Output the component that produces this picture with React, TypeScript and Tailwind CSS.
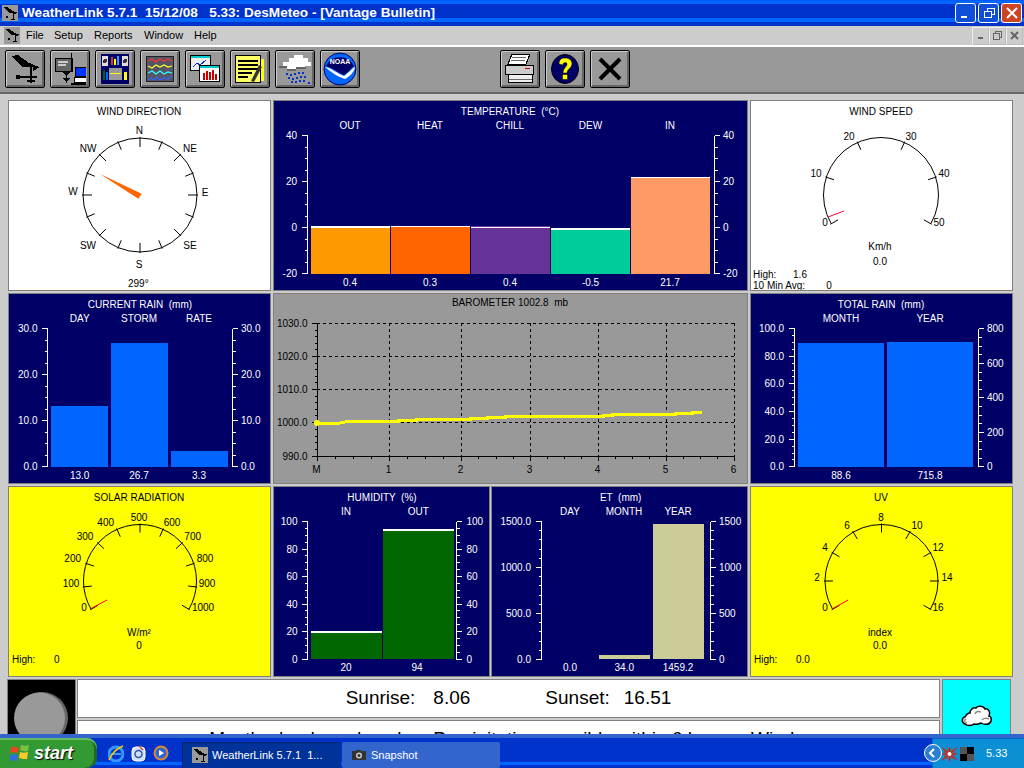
import type { ReactNode } from 'react'

const FONT = "'Liberation Sans', Arial, sans-serif"

// text centred on (x, y) by default, all chart text is 10px Arial in the original
function T({ x, y, fill = '#000', a = 'middle', children }: { x: number; y: number; fill?: string; a?: 'middle' | 'start' | 'end'; children: ReactNode }) {
  return (
    <text x={x} y={y + 3.5} fill={fill} textAnchor={a} fontSize={10} fontFamily={FONT} xmlSpace="preserve">
      {children}
    </text>
  )
}

function Chart({ x, y, w, h, children }: { x: number; y: number; w: number; h: number; children: ReactNode }) {
  return (
    <svg className="block" width={w} height={h} viewBox={`${x} ${y} ${w} ${h}`}>
      {children}
    </svg>
  )
}

type Scale = { v: string; y: number }[]

function Axis({ x, side, scale, minors, labelX, color = '#fff' }: { x: number; side: 'l' | 'r'; scale: Scale; minors: number; labelX: number; color?: string }) {
  const dir = side === 'l' ? -1 : 1
  const ticks: number[] = []
  scale.forEach((s, i) => {
    if (i === scale.length - 1) return
    const next = scale[i + 1].y
    for (let m = 1; m <= minors; m++) ticks.push(s.y + ((next - s.y) * m) / (minors + 1))
  })
  return (
    <g shapeRendering="crispEdges">
      <line x1={x} x2={x} y1={scale[0].y} y2={scale[scale.length - 1].y + 0.5} stroke={color} />
      {scale.map((s) => (
        <line key={s.v} x1={x} x2={x + dir * 5.5} y1={s.y} y2={s.y} stroke={color} />
      ))}
      {ticks.map((t) => (
        <line key={t} x1={x} x2={x + dir * 3} y1={t} y2={t} stroke={color} />
      ))}
      {scale.map((s) => (
        <T key={s.v} x={labelX} y={s.y} fill={color} a={side === 'l' ? 'end' : 'start'}>
          {s.v}
        </T>
      ))}
    </g>
  )
}

function Bar({ x1, x2, top, bottom, fill, line }: { x1: number; x2: number; top: number; bottom: number; fill: string; line?: number }) {
  return (
    <g shapeRendering="crispEdges">
      <rect x={x1} y={top} width={x2 - x1} height={bottom - top} fill={fill} />
      {line !== undefined && <rect x={x1} y={line} width={x2 - x1} height={2} fill="#fff" />}
    </g>
  )
}

function polar(cx: number, cy: number, r: number, deg: number) {
  const a = (deg * Math.PI) / 180
  return [cx + r * Math.sin(a), cy - r * Math.cos(a)]
}

function Gauge({ cx, cy, r, segments, needle }: { cx: number; cy: number; r: number; segments: number; needle: number[] }) {
  const [ax, ay] = polar(cx, cy, r, -120)
  const [bx, by] = polar(cx, cy, r, 120)
  const ticks = Array.from({ length: segments + 1 }, (_, i) => -120 + (240 * i) / segments)
  return (
    <g fill="none" stroke="#000" strokeWidth={1}>
      <path d={`M${ax} ${ay}A${r} ${r} 0 1 1 ${bx} ${by}`} />
      {ticks.map((d) => {
        const [x1, y1] = polar(cx, cy, r + 1, d)
        const [x2, y2] = polar(cx, cy, r - 8, d)
        return <line key={d} x1={x1} y1={y1} x2={x2} y2={y2} />
      })}
      <line x1={needle[0]} y1={needle[1]} x2={needle[2]} y2={needle[3]} stroke="#ff0033" />
    </g>
  )
}

function WindDirection() {
  const ticks = Array.from({ length: 16 }, (_, i) => i * 22.5)
  return (
    <Chart x={9} y={101} w={261} h={189}>
      <T x={139} y={111.7}>WIND DIRECTION</T>
      <circle cx={140} cy={195} r={57} fill="none" stroke="#000" />
      {ticks.map((d) => {
        const [x1, y1] = polar(140, 195, 58, d)
        const [x2, y2] = polar(140, 195, d % 45 === 0 ? 48 : 49, d)
        return <line key={d} x1={x1} y1={y1} x2={x2} y2={y2} stroke="#000" />
      })}
      <polygon points="100,174 141.7,193.7 138.3,198.7" fill="#ff6600" />
      <T x={139.3} y={130}>N</T>
      <T x={190} y={148}>NE</T>
      <T x={205} y={192}>E</T>
      <T x={190} y={245.7}>SE</T>
      <T x={139} y={264}>S</T>
      <T x={88} y={245.7}>SW</T>
      <T x={73} y={191.7}>W</T>
      <T x={88} y={148}>NW</T>
      <T x={138.3} y={283}>299°</T>
    </Chart>
  )
}

function Temperature() {
  const scale = [
    { v: '40', y: 135.5 },
    { v: '20', y: 181.5 },
    { v: '0', y: 227.5 },
    { v: '-20', y: 273.5 },
  ]
  const heads = [
    ['OUT', 350, '0.4'],
    ['HEAT', 430, '0.3'],
    ['CHILL', 510, '0.4'],
    ['DEW', 590.5, '-0.5'],
    ['IN', 670, '21.7'],
  ] as const
  return (
    <Chart x={274} y={101} w={473} h={189}>
      <T x={510} y={111.7} fill="#fff">TEMPERATURE  (°C)</T>
      {heads.map((h) => (
        <T key={h[0]} x={h[1]} y={125.7} fill="#fff">{h[0]}</T>
      ))}
      <Axis x={307.5} side="l" scale={scale} minors={3} labelX={297} />
      <Axis x={714.5} side="r" scale={scale} minors={3} labelX={723} />
      <Bar x1={311} x2={390} top={226} bottom={274} fill="#ff9900" line={226} />
      <Bar x1={391} x2={470} top={226} bottom={274} fill="#ff6600" />
      <rect x={391} y={226} width={79} height={1} fill="#fff" shapeRendering="crispEdges" />
      <Bar x1={471} x2={550} top={226} bottom={274} fill="#663399" />
      <rect x={471} y={227} width={79} height={1} fill="#fff" shapeRendering="crispEdges" />
      <Bar x1={551} x2={630} top={228} bottom={274} fill="#00cc99" line={228} />
      <Bar x1={631} x2={710} top={177} bottom={274} fill="#ff9966" />
      <rect x={631} y={177} width={79} height={1} fill="#fff" shapeRendering="crispEdges" />
      {heads.map((h) => (
        <T key={h[0]} x={h[1]} y={282.3} fill="#fff">{h[2]}</T>
      ))}
    </Chart>
  )
}

function WindSpeed() {
  const labels = [
    ['0', 825, 222],
    ['10', 816, 173],
    ['20', 849, 136],
    ['30', 911, 136],
    ['40', 944, 173],
    ['50', 939, 222],
  ] as const
  return (
    <Chart x={751} y={101} w={261} h={189}>
      <T x={881} y={111.7}>WIND SPEED</T>
      <Gauge cx={881} cy={195} r={57.5} segments={5} needle={[828, 217, 844, 211]} />
      {labels.map((l) => (
        <T key={l[0]} x={l[1]} y={l[2]}>{l[0]}</T>
      ))}
      <T x={880} y={246.7}>Km/h</T>
      <T x={880} y={261}>0.0</T>
      <T x={753} y={274.7} a="start">High:</T>
      <T x={800} y={274.7}>1.6</T>
      <T x={753} y={285.7} a="start">10 Min Avg:</T>
      <T x={829} y={285.7}>0</T>
    </Chart>
  )
}

function CurrentRain() {
  const scale = [
    { v: '30.0', y: 328.5 },
    { v: '20.0', y: 374.5 },
    { v: '10.0', y: 420.5 },
    { v: '0.0', y: 466.5 },
  ]
  return (
    <Chart x={9} y={294} w={261} h={189}>
      <T x={140} y={304.7} fill="#fff">CURRENT RAIN  (mm)</T>
      <T x={79.7} y={318.7} fill="#fff">DAY</T>
      <T x={139} y={318.7} fill="#fff">STORM</T>
      <T x={199} y={318.7} fill="#fff">RATE</T>
      <Axis x={47.5} side="l" scale={scale} minors={3} labelX={37.5} />
      <Axis x={232.5} side="r" scale={scale} minors={3} labelX={241} />
      <Bar x1={51} x2={108} top={406} bottom={467} fill="#0066ff" />
      <Bar x1={111} x2={168} top={343} bottom={467} fill="#0066ff" />
      <Bar x1={171} x2={228} top={451} bottom={467} fill="#0066ff" />
      <T x={79.7} y={475.3} fill="#fff">13.0</T>
      <T x={139} y={475.3} fill="#fff">26.7</T>
      <T x={199} y={475.3} fill="#fff">3.3</T>
    </Chart>
  )
}

function Barometer() {
  const xs = [317.5, 389.5, 461.5, 530.5, 598.5, 666.5, 734.5]
  const ys = [323.5, 356.5, 389.5, 422.5, 456.5]
  const yLabels = ['1030.0', '1020.0', '1010.0', '1000.0', '990.0']
  const xLabels = ['M', '1', '2', '3', '4', '5', '6']
  const line = '317,423 340,423 348,421.5 398,421.5 398,420.5 416,420.5 416,419.5 470,419.5 470,418.5 487,418.5 487,417.5 505,417.5 505,416.5 603,416.5 603,415.5 612,415.5 612,414.5 675,414.5 675,413.5 692,413.5 692,412.5 702,412.5'
  const yMinor: number[] = []
  for (let i = 0; i < 4; i++) for (let m = 1; m < 5; m++) yMinor.push(ys[i] + ((ys[i + 1] - ys[i]) * m) / 5)
  const xMinor: number[] = []
  for (let i = 0; i < 6; i++) for (let m = 1; m < 4; m++) xMinor.push(xs[i] + ((xs[i + 1] - xs[i]) * m) / 4)
  return (
    <Chart x={274} y={294} w={473} h={189}>
      <T x={510} y={302.3}>BAROMETER 1002.8  mb</T>
      <g shapeRendering="crispEdges" stroke="#000" strokeDasharray="3 3">
        {xs.slice(1).map((x) => (
          <line key={x} x1={x} x2={x} y1={323} y2={456} />
        ))}
        {ys.slice(0, 4).map((y) => (
          <line key={y} x1={317} x2={735} y1={y} y2={y} />
        ))}
      </g>
      <g shapeRendering="crispEdges" stroke="#000">
        <line x1={317.5} x2={317.5} y1={323} y2={461} />
        <line x1={312} x2={735} y1={456.5} y2={456.5} />
        {ys.map((y) => (
          <line key={y} x1={312} x2={317} y1={y} y2={y} />
        ))}
        {yMinor.map((y) => (
          <line key={y} x1={315} x2={317} y1={y} y2={y} />
        ))}
        {xs.map((x) => (
          <line key={x} x1={x} x2={x} y1={456} y2={461} />
        ))}
        {xMinor.map((x) => (
          <line key={x} x1={x} x2={x} y1={456} y2={459} />
        ))}
      </g>
      <polyline points={line} fill="none" stroke="#ffff00" strokeWidth={3} shapeRendering="crispEdges" />
      <circle cx={317} cy={423} r={3} fill="#ffff00" />
      {ys.map((y, i) => (
        <T key={y} x={307.5} y={y} a="end">{yLabels[i]}</T>
      ))}
      {xs.map((x, i) => (
        <T key={x} x={x - 1} y={469.7}>{xLabels[i]}</T>
      ))}
    </Chart>
  )
}

function TotalRain() {
  const left = [
    { v: '100.0', y: 328.5 },
    { v: '80.0', y: 356.5 },
    { v: '60.0', y: 383.5 },
    { v: '40.0', y: 411.5 },
    { v: '20.0', y: 439.5 },
    { v: '0.0', y: 466.5 },
  ]
  const right = [
    { v: '800', y: 328.5 },
    { v: '600', y: 363.5 },
    { v: '400', y: 397.5 },
    { v: '200', y: 432.5 },
    { v: '0', y: 466.5 },
  ]
  return (
    <Chart x={751} y={294} w={261} h={189}>
      <T x={881} y={304.7} fill="#fff">TOTAL RAIN  (mm)</T>
      <T x={841} y={318.7} fill="#fff">MONTH</T>
      <T x={930} y={318.7} fill="#fff">YEAR</T>
      <Axis x={794.5} side="l" scale={left} minors={3} labelX={784} />
      <Axis x={978.5} side="r" scale={right} minors={3} labelX={987} />
      <Bar x1={798} x2={884} top={343} bottom={467} fill="#0066ff" />
      <Bar x1={887} x2={973} top={342} bottom={467} fill="#0066ff" />
      <T x={841} y={475.3} fill="#fff">88.6</T>
      <T x={930} y={475.3} fill="#fff">715.8</T>
    </Chart>
  )
}

function SolarRadiation() {
  const labels = [
    ['0', 84, 607],
    ['100', 71, 583],
    ['200', 72.7, 558],
    ['300', 85, 536.7],
    ['400', 105.7, 522],
    ['500', 139, 517],
    ['600', 172, 522],
    ['700', 192.7, 536],
    ['800', 205, 558],
    ['900', 207, 583],
    ['1000', 203, 607],
  ] as const
  return (
    <Chart x={9} y={487} w={261} h={189}>
      <T x={139} y={497}>SOLAR RADIATION</T>
      <Gauge cx={140} cy={581} r={56.5} segments={10} needle={[90.7, 608.7, 107, 600]} />
      {labels.map((l) => (
        <T key={l[0]} x={l[1]} y={l[2]}>{l[0]}</T>
      ))}
      <T x={139} y={632.7}>W/m²</T>
      <T x={139} y={645}>0</T>
      <T x={12} y={659.7} a="start">High:</T>
      <T x={56.7} y={659.7}>0</T>
    </Chart>
  )
}

function Humidity() {
  const scale = [100, 80, 60, 40, 20, 0].map((v, i) => ({ v: String(v), y: 521.5 + i * 27.5 }))
  return (
    <Chart x={274} y={487} w={215} h={189}>
      <T x={382} y={497.7} fill="#fff">HUMIDITY  (%)</T>
      <T x={346} y={511.3} fill="#fff">IN</T>
      <T x={418.3} y={511.3} fill="#fff">OUT</T>
      <Axis x={307.5} side="l" scale={scale} minors={3} labelX={297.5} />
      <Axis x={456.5} side="r" scale={scale} minors={3} labelX={466.5} />
      <Bar x1={311} x2={382} top={631} bottom={659} fill="#006600" line={631} />
      <Bar x1={383} x2={454} top={529} bottom={659} fill="#006600" line={529} />
      <T x={346} y={667.7} fill="#fff">20</T>
      <T x={417} y={667.7} fill="#fff">94</T>
    </Chart>
  )
}

function Et() {
  const left = [
    { v: '1500.0', y: 521.5 },
    { v: '1000.0', y: 567.5 },
    { v: '500.0', y: 613.5 },
    { v: '0.0', y: 659.5 },
  ]
  const right = [
    { v: '1500', y: 521.5 },
    { v: '1000', y: 567.5 },
    { v: '500', y: 613.5 },
    { v: '0', y: 659.5 },
  ]
  return (
    <Chart x={492} y={487} w={255} h={189}>
      <T x={620.7} y={497.7} fill="#fff">ET  (mm)</T>
      <T x={570} y={511.3} fill="#fff">DAY</T>
      <T x={624} y={511.3} fill="#fff">MONTH</T>
      <T x={678} y={511.3} fill="#fff">YEAR</T>
      <Axis x={541.5} side="l" scale={left} minors={4} labelX={531} />
      <Axis x={710.5} side="r" scale={right} minors={4} labelX={719} />
      <Bar x1={599} x2={650} top={655} bottom={659} fill="#cccc99" />
      <Bar x1={653} x2={704} top={524} bottom={659} fill="#cccc99" />
      <T x={570} y={667.7} fill="#fff">0.0</T>
      <T x={624.3} y={667.7} fill="#fff">34.0</T>
      <T x={678} y={667.7} fill="#fff">1459.2</T>
    </Chart>
  )
}

function Uv() {
  const labels = [
    ['0', 825, 607.7],
    ['2', 817, 577],
    ['4', 825, 547],
    ['6', 847, 525],
    ['8', 881, 517],
    ['10', 917, 525],
    ['12', 938, 547],
    ['14', 947, 577],
    ['16', 938, 607.7],
  ] as const
  return (
    <Chart x={751} y={487} w={261} h={189}>
      <T x={881} y={497}>UV</T>
      <Gauge cx={881.5} cy={581} r={56.5} segments={8} needle={[832, 609, 848, 600]} />
      {labels.map((l) => (
        <T key={l[0]} x={l[1]} y={l[2]}>{l[0]}</T>
      ))}
      <T x={880} y={632.7}>index</T>
      <T x={880} y={645}>0.0</T>
      <T x={754} y={659} a="start">High:</T>
      <T x={796} y={659} a="start">0.0</T>
    </Chart>
  )
}

function StationIcon({ size = 16 }: { size?: number }) {
  return (
    <svg width={size} height={size} viewBox="0 0 32 32" shapeRendering="crispEdges">
      <polygon points="2,3 9,2 20,10 24,11 24,14 14,14" fill="#000" />
      <rect x="21" y="11" width="2" height="19" fill="#000" />
      <polygon points="24,12 31,14 24,18" fill="#000" />
      <rect x="8" y="23" width="20" height="1.5" fill="#000" />
      <rect x="7" y="22" width="4" height="4" fill="#000" />
      <rect x="18" y="27" width="8" height="2" fill="#000" />
    </svg>
  )
}

function LinkIcon() {
  return (
    <svg width="32" height="34" viewBox="0 0 32 34" shapeRendering="crispEdges">
      <rect x="1" y="6" width="17" height="13" fill="#666" stroke="#000" />
      <rect x="4" y="9" width="10" height="2" fill="#ccc" />
      <rect x="4" y="12" width="8" height="2" fill="#ccc" />
      <rect x="17" y="1" width="1" height="18" fill="#000" />
      <rect x="12" y="19" width="1" height="12" fill="#000" />
      <polygon points="9,20 16,20 12.5,24" fill="#000" />
      <polygon points="9,26 16,26 12.5,30" fill="#000" />
      <rect x="21" y="15" width="11" height="9" fill="#0033ff" stroke="#000" />
      <rect x="20" y="25" width="12" height="5" fill="#fff" stroke="#000" />
      <rect x="17" y="31" width="15" height="2" fill="#000" />
    </svg>
  )
}

function BulletinIcon() {
  return (
    <svg width="28" height="30" viewBox="0 0 28 30" shapeRendering="crispEdges">
      <rect width="28" height="30" fill="#000066" />
      <rect x="1" y="2" width="6" height="10" fill="#ddd" />
      <rect x="21" y="2" width="6" height="10" fill="#ddd" />
      <circle cx="4" cy="7" r="2" fill="#333" />
      <circle cx="24" cy="7" r="2" fill="#333" />
      <rect x="10" y="3" width="2" height="8" fill="#cc3333" />
      <rect x="13" y="5" width="2" height="6" fill="#ffff00" />
      <rect x="16" y="2" width="2" height="9" fill="#3399ff" />
      <rect x="8" y="14" width="13" height="12" fill="#999" />
      <rect x="9" y="19" width="11" height="1" fill="#ffff00" />
      <rect x="2" y="16" width="2" height="10" fill="#006600" />
      <rect x="5" y="18" width="2" height="8" fill="#0066ff" />
      <rect x="23" y="18" width="3" height="8" fill="#ffff00" />
    </svg>
  )
}

function GraphIcon() {
  return (
    <svg width="28" height="26" viewBox="0 0 28 26">
      <rect x="0.5" y="0.5" width="27" height="25" fill="#555566" stroke="#222" />
      <polyline points="2,5 6,3 10,6 14,3 18,5 22,3 26,5" fill="none" stroke="#ff3333" strokeWidth="1.2" />
      <polyline points="2,10 6,12 10,9 14,11 18,9 22,11 26,10" fill="none" stroke="#ffff33" strokeWidth="1.2" />
      <polyline points="2,17 6,15 10,18 14,15 18,18 22,16 26,17" fill="none" stroke="#33ffff" strokeWidth="1.2" />
      <polyline points="2,24 5,22 8,24 11,21 14,24 18,22 22,23 26,20" fill="none" stroke="#3366ff" strokeWidth="1.2" />
    </svg>
  )
}

function WindowsIcon() {
  return (
    <svg width="30" height="28" viewBox="0 0 30 28" shapeRendering="crispEdges">
      <rect x="0.5" y="0.5" width="20" height="15" fill="#eee" stroke="#000" />
      <rect x="1" y="1" width="19" height="2" fill="#00cccc" />
      <polyline points="3,12 7,8 10,10 16,5" fill="none" stroke="#0033cc" />
      <rect x="9.5" y="10.5" width="19.5" height="16" fill="#fff" stroke="#000" />
      <rect x="10" y="11" width="19" height="2" fill="#00cccc" />
      <rect x="13" y="18" width="2" height="7" fill="#cc0000" />
      <rect x="16" y="16" width="2" height="9" fill="#cc0000" />
      <rect x="19" y="17" width="2" height="8" fill="#cc0000" />
      <rect x="22" y="15" width="2" height="10" fill="#cc0000" />
      <rect x="25" y="19" width="2" height="6" fill="#cc0000" />
    </svg>
  )
}

function NotepadIcon() {
  return (
    <svg width="30" height="30" viewBox="0 0 30 30" shapeRendering="crispEdges">
      <rect x="26" y="5" width="3" height="22" fill="#ffff00" />
      <rect x="0.5" y="1.5" width="25" height="27" fill="#ffff66" stroke="#000" />
      <rect x="3" y="6" width="20" height="2" fill="#000" />
      <rect x="3" y="10" width="20" height="2" fill="#000" />
      <rect x="3" y="14" width="20" height="2" fill="#000" />
      <rect x="3" y="18" width="14" height="2" fill="#000" />
      <rect x="3" y="22" width="10" height="2" fill="#000" />
      <polygon points="16,27 24,11 27,13 19,28" fill="#333" shapeRendering="auto" />
    </svg>
  )
}

function RainIcon() {
  const drops = [
    [8, 19], [12, 20], [16, 19], [20, 18], [24, 18], [10, 23], [14, 24], [18, 23], [22, 22], [26, 22], [13, 27], [17, 27], [21, 26], [25, 26], [30, 28],
  ]
  return (
    <svg width="34" height="30" viewBox="0 0 34 30" shapeRendering="crispEdges">
      <path d="M1 12h4V8h6V4h5V1h9v3h5v4h3v4h-6v3H18v2H9v-3H1z" fill="#fff" />
      <path d="M1 12h8v3h9v-2h10v2H18v2H9v-3H1z" fill="#666" />
      {drops.map((d) => (
        <rect key={d.join()} x={d[0]} y={d[1]} width="2" height="2" fill="#0033cc" />
      ))}
    </svg>
  )
}

function NoaaIcon() {
  return (
    <svg width="34" height="34" viewBox="0 0 34 34">
      <circle cx="17" cy="17" r="16" fill="#0066ff" stroke="#000066" />
      <path d="M3 14A15.500 15.500 0 0 1 31 14C28 16 26 20 21 23C15 21 10 16 3 14Z" fill="#000066" />
      <path d="M2 15C9 16 15 22 21 24C26 21 28 17 32 15C32 18 28 24 22 27C15 25 8 20 2 15Z" fill="#fff" />
      <text x="17" y="12" textAnchor="middle" fontSize="7" fontWeight="700" fill="#fff" fontFamily={FONT}>NOAA</text>
    </svg>
  )
}

function PrinterIcon() {
  return (
    <svg width="30" height="32" viewBox="0 0 30 32" shapeRendering="crispEdges">
      <polygon points="7,1 25,1 21,11 3,11" fill="#fff" stroke="#000" />
      <rect x="7" y="4" width="14" height="1" fill="#666" />
      <rect x="6" y="7" width="14" height="1" fill="#666" />
      <rect x="0.5" y="12.500" width="28" height="9" fill="#ccc" stroke="#000" />
      <rect x="20" y="15" width="5" height="1" fill="#cc0000" />
      <rect x="3.5" y="21.500" width="24" height="8" fill="#eee" stroke="#000" />
      <rect x="4" y="26" width="23" height="1" fill="#666" />
    </svg>
  )
}

function HelpIcon() {
  return (
    <svg width="28" height="30" viewBox="0 0 28 30">
      <ellipse cx="14" cy="15" rx="13.500" ry="14.500" fill="#000066" stroke="#000" />
      <path d="M8 10C8 5 11 4 14 4C18 4 21 6 21 10C21 14 16 15 16 19H12C12 14 16 13 16 10C16 8 12 8 12 11Z" fill="#ffff00" stroke="#000" strokeWidth="0.5" />
      <rect x="11.500" y="20.500" width="5" height="5" fill="#ffff00" stroke="#000" strokeWidth="0.5" />
    </svg>
  )
}

function CrossIcon() {
  return (
    <svg width="24" height="24" viewBox="0 0 24 24">
      <path d="M2 2L22 22M22 2L2 22" stroke="#000" strokeWidth="4" fill="none" />
    </svg>
  )
}

function ToolButton({ children }: { children: ReactNode }) {
  return (
    <button className="flex h-[38px] w-[40px] items-center justify-center rounded-[2px] border border-black bg-[#999] shadow-[inset_1px_1px_0_#ccc,inset_-2px_-2px_0_#666]">
      {children}
    </button>
  )
}

function CaptionButton({ bg, children }: { bg: string; children: ReactNode }) {
  return (
    <div className={`flex h-[20px] w-[21px] items-center justify-center rounded-[3px] border border-white ${bg}`}>
      <svg width="14" height="14" viewBox="0 0 14 14" fill="none" stroke="#fff" strokeWidth="2" shapeRendering="crispEdges">
        {children}
      </svg>
    </div>
  )
}

function MdiButton({ children }: { children: ReactNode }) {
  return (
    <div className="flex h-[18px] w-[17px] items-center justify-center border border-[#eee] border-b-[#bbb] border-r-[#bbb]">
      <svg width="11" height="11" viewBox="0 0 11 11" fill="none" stroke="#666" strokeWidth="2" shapeRendering="crispEdges">
        {children}
      </svg>
    </div>
  )
}

function Panel({ bg, children }: { bg: string; children?: ReactNode }) {
  return <div className={`overflow-hidden border border-[#808080] ${bg}`}>{children}</div>
}

function Cloud() {
  return (
    <svg width="32" height="22" viewBox="0 0 32 22">
      <path d="M4 12C1 12 0 18 4 19C6 21 11 21 13 19C16 20 18 19 20 18C23 20 29 20 30 16C31 13 29 11 28 11C30 7 27 3 24 4C22 0 16 1 15 3C12 2 9 5 9 8C6 8 5 10 4 12Z" fill="#fff" stroke="#000" strokeWidth="1.500" />
      <path d="M5 14C3 15 3 17 6 18M21 15C22 13 26 13 28 14M14 9C15 6 18 6 20 7" fill="none" stroke="#888" strokeWidth="1.500" />
    </svg>
  )
}

function Moon() {
  return (
    <svg className="block" width="67" height="70" viewBox="0 0 67 70">
      <circle cx="34" cy="38" r="26" fill="#666" />
      <circle cx="31.500" cy="38" r="25.500" fill="#999" />
    </svg>
  )
}

function StartFlag() {
  return (
    <svg width="20" height="19" viewBox="0 0 20 19">
      <path d="M1 4C4 2 6 3 9 4L8 9C5 8 3 8 0 9Z" fill="#e8481c" />
      <path d="M11 1C14 2 16 2 19 1L18 7C15 8 13 7 10 6Z" fill="#7cc142" />
      <path d="M0 11C3 10 5 10 8 11L7 17C4 16 2 16 0 17Z" fill="#2f6fde" />
      <path d="M10 8C13 9 15 9 18 8L17 15C14 15 12 15 9 14Z" fill="#f7c92c" />
    </svg>
  )
}

function Taskbar() {
  return (
    <div className="relative flex h-[34px] shrink-0 items-end bg-[linear-gradient(to_bottom,#3366cc_0,#3366cc_4px,#0033cc_4px,#0033cc_28px,#0066ff_28px,#0066ff_31px,#0033cc_31px)] text-[11px] text-white">
      <div className="flex h-[30px] w-[97px] items-center rounded-r-[10px] bg-[#339933] pl-[10px] shadow-[inset_0_2px_0_#66bb66,inset_-3px_0_0_#226622]">
        <StartFlag />
        <span className="ml-[4px] text-[18px] font-bold italic [text-shadow:1px_1px_1px_#000]">start</span>
      </div>
      <div className="flex h-[30px] w-[85px] items-center gap-[7px] pl-[11px]">
        <svg width="16" height="17" viewBox="0 0 16 17">
          <ellipse cx="8" cy="9" rx="7" ry="7" fill="none" stroke="#3399ff" strokeWidth="3" />
          <path d="M3 9H13" stroke="#3399ff" strokeWidth="2" />
          <path d="M1 15C4 8 10 3 15 1" fill="none" stroke="#ffcc00" strokeWidth="1.500" />
        </svg>
        <svg width="15" height="17" viewBox="0 0 15 17">
          <rect x="1" y="2" width="13" height="14" rx="4" fill="#cfe0ff" stroke="#fff" />
          <circle cx="7.500" cy="9" r="3.500" fill="none" stroke="#3355aa" strokeWidth="1.500" />
          <path d="M8 1L12 5" stroke="#cc5522" strokeWidth="1.500" />
        </svg>
        <svg width="16" height="16" viewBox="0 0 16 16">
          <circle cx="8" cy="8" r="7.500" fill="#dd8833" />
          <circle cx="8" cy="8" r="5.500" fill="#3366cc" />
          <path d="M6 5L11 8L6 11Z" fill="#fff" />
        </svg>
      </div>
      <div className="flex h-[26px] w-[159px] items-center rounded-[2px] bg-[#003399] pl-[10px] shadow-[inset_1px_1px_1px_#002266]">
        <div className="flex h-[16px] w-[16px] items-center justify-center bg-[#999]">
          <StationIcon size={15} />
        </div>
        <span className="ml-[4px] whitespace-pre">WeatherLink 5.7.1  1...</span>
      </div>
      <div className="ml-[1px] flex h-[26px] w-[158px] items-center rounded-[2px] bg-[#3366cc] pl-[10px]">
        <svg width="14" height="10" viewBox="0 0 14 10" shapeRendering="crispEdges">
          <rect y="1" width="14" height="9" fill="#333" />
          <rect x="4" width="5" height="2" fill="#333" />
          <circle cx="7" cy="5.500" r="3" fill="#ccc" shapeRendering="auto" />
          <circle cx="7" cy="5.500" r="1.500" fill="#333" shapeRendering="auto" />
        </svg>
        <span className="ml-[5px]">Snapshot</span>
      </div>
      <div className="relative ml-auto flex h-[30px] w-[92px] items-center border-l border-t border-[#0066cc] bg-[#0d8fd6] pl-[9px]">
        <div className="absolute -left-[9px] top-[5px] flex h-[18px] w-[18px] items-center justify-center rounded-full border border-white bg-[#2a7fd0]">
          <svg width="10" height="10" viewBox="0 0 10 10" fill="none" stroke="#fff" strokeWidth="2">
            <path d="M6 1L2 5L6 9" />
          </svg>
        </div>
        <svg width="15" height="14" viewBox="0 0 15 14">
          <rect x="2" y="2" width="11" height="10" fill="#666" />
          <path d="M0 1L15 13M15 1L0 13M7.500 0V14M0 7H15" stroke="#ff0000" strokeWidth="1" />
          <circle cx="7.500" cy="7" r="2" fill="#fff" />
        </svg>
        <svg className="ml-[3px]" width="14" height="14" viewBox="0 0 14 14" shapeRendering="crispEdges">
          <rect width="7" height="7" fill="#555" />
          <rect x="7" width="7" height="7" fill="#000" />
          <rect y="7" width="7" height="7" fill="#000" />
          <rect x="7" y="7" width="7" height="7" fill="#555" />
        </svg>
        <span className="ml-[12px]">5.33</span>
      </div>
    </div>
  )
}

export default function App() {
  return (
    <div className="flex h-[768px] w-[1024px] flex-col overflow-hidden bg-[#cccccc] font-['Liberation_Sans',Arial,sans-serif]">
      {/* Title bar */}
      <div className="flex h-[26px] shrink-0 items-center bg-[linear-gradient(to_bottom,#0055ee_0,#0066ff_1px,#0066ff_4px,#0033cc_4px,#0033cc_18px,#0066ff_18px,#0066ff_22px,#0033cc_22px)] pl-[2px] pr-[2px]">
        <div className="flex h-[16px] w-[16px] items-center justify-center bg-[#999]">
          <StationIcon size={15} />
        </div>
        <span className="ml-[4px] whitespace-pre text-[13.6px] font-bold text-white">WeatherLink 5.7.1  15/12/08   5.33: DesMeteo - [Vantage Bulletin]</span>
        <div className="ml-auto flex items-center gap-[2px]">
          <CaptionButton bg="bg-[#0f4fd8]">
            <path d="M2 11H8" />
          </CaptionButton>
          <CaptionButton bg="bg-[#0f4fd8]">
            <path strokeWidth="1" d="M2.500 5.500h7v6h-7zM5.500 5V2.500h7v6H10" />
          </CaptionButton>
          <CaptionButton bg="bg-[#cc4422]">
            <path d="M2 2L12 12M12 2L2 12" shapeRendering="auto" />
          </CaptionButton>
        </div>
      </div>

      {/* Menu */}
      <div className="flex h-[21px] shrink-0 items-center border-b-[2px] border-white bg-[#cccccc] pl-[4px] pr-[1px] text-[11px] text-black">
        <div className="flex h-[17px] w-[16px] items-center justify-center bg-[#999]">
          <StationIcon size={15} />
        </div>
        <span className="ml-[6px] w-[28px]">File</span>
        <span className="w-[40px]">Setup</span>
        <span className="w-[50px]">Reports</span>
        <span className="w-[50px]">Window</span>
        <span>Help</span>
        <div className="ml-auto flex">
          <MdiButton>
            <path d="M3 8H8" />
          </MdiButton>
          <MdiButton>
            <path strokeWidth="1" d="M1.500 3.500h6v6h-6zM3.500 3V1.500h6v6H8" />
          </MdiButton>
          <MdiButton>
            <path d="M2 2L9 9M9 2L2 9" shapeRendering="auto" />
          </MdiButton>
        </div>
      </div>

      {/* Toolbar */}
      <div className="flex h-[47px] shrink-0 items-start gap-[5px] border-b-[2px] border-[#666] bg-[#999] pl-[5px] pt-[3px]">
        <ToolButton><StationIcon size={32} /></ToolButton>
        <ToolButton><LinkIcon /></ToolButton>
        <ToolButton><BulletinIcon /></ToolButton>
        <ToolButton><GraphIcon /></ToolButton>
        <ToolButton><WindowsIcon /></ToolButton>
        <ToolButton><NotepadIcon /></ToolButton>
        <ToolButton><RainIcon /></ToolButton>
        <ToolButton><NoaaIcon /></ToolButton>
        <div className="w-[130px]" />
        <ToolButton><PrinterIcon /></ToolButton>
        <ToolButton><HelpIcon /></ToolButton>
        <ToolButton><CrossIcon /></ToolButton>
      </div>

      {/* Bulletin */}
      <div className="min-h-0 flex-1 overflow-hidden pl-[7px] pt-[6px]">
        <div className="ml-[1px] grid grid-cols-[263px_475px_263px] grid-rows-[191px_191px_191px] gap-[2px]">
          <Panel bg="bg-white"><WindDirection /></Panel>
          <Panel bg="bg-[#000066]"><Temperature /></Panel>
          <Panel bg="bg-white"><WindSpeed /></Panel>
          <Panel bg="bg-[#000066]"><CurrentRain /></Panel>
          <Panel bg="bg-[#999999]"><Barometer /></Panel>
          <Panel bg="bg-[#000066]"><TotalRain /></Panel>
          <Panel bg="bg-[#ffff00]"><SolarRadiation /></Panel>
          <div className="grid grid-cols-[217px_257px] gap-[1px]">
            <Panel bg="bg-[#000066]"><Humidity /></Panel>
            <Panel bg="bg-[#000066]"><Et /></Panel>
          </div>
          <Panel bg="bg-[#ffff00]"><Uv /></Panel>
        </div>
        <div className="mt-[2px] flex">
          <div className="h-[90px] w-[69px] shrink-0 overflow-hidden border border-[#808080] bg-black">
            <Moon />
          </div>
          <div className="ml-[1px] flex w-[863px] shrink-0 flex-col gap-[2px]">
            <div className="flex h-[39px] items-center justify-center border border-[#808080] bg-white text-[19px] text-black">
              <span>Sunrise:</span>
              <span className="ml-[18px]">8.06</span>
              <span className="ml-[75px]">Sunset:</span>
              <span className="ml-[14px]">16.51</span>
            </div>
            <div className="flex h-[39px] items-center justify-center border border-[#808080] bg-white text-[19px] text-black">
              <span className="whitespace-pre">Mostly cloudy and cooler.  Precipitation possible within 6 hours.  Windy.</span>
            </div>
          </div>
          <div className="ml-[2px] flex h-[90px] w-[69px] shrink-0 items-start justify-center border border-[#808080] bg-[#00ffff] pt-[25px]">
            <Cloud />
          </div>
        </div>
      </div>

      <Taskbar />
    </div>
  )
}
